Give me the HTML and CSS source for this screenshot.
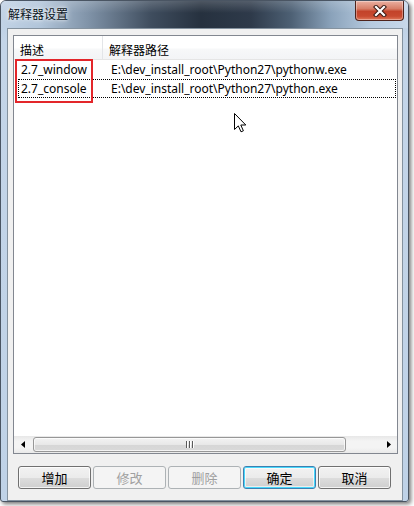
FILE: index.html
```html
<!DOCTYPE html>
<html lang="zh">
<head>
<meta charset="utf-8">
<title>解释器设置</title>
<link rel="stylesheet" href="styles.css">
</head>
<body>
<div class="window">
  <div class="titlebar">
    <span class="title">解释器设置</span>
    <div class="close">
      <svg width="14" height="12" viewBox="0 0 14 12">
        <path d="M3 2 L11 10 M11 2 L3 10" stroke="#3a1a14" stroke-width="4.2" stroke-linecap="square"/>
        <path d="M3 2 L11 10 M11 2 L3 10" stroke="#ffffff" stroke-width="2.2" stroke-linecap="square"/>
      </svg>
    </div>
  </div>
  <div class="client">
    <div class="list">
      <div class="header">
        <div class="hcell c1">描述</div>
        <div class="hcell c2">解释器路径</div>
      </div>
      <div class="row">
        <div class="cell c1">2.7_window</div>
        <div class="cell c2">E:\dev_install_root\Python27\pythonw.exe</div>
      </div>
      <div class="row focus">
        <div class="cell c1">2.7_console</div>
        <div class="cell c2">E:\dev_install_root\Python27\python.exe</div>
      </div>
      <div class="spacer"></div>
      <div class="hscroll">
        <div class="arrow">
          <svg width="4" height="7" viewBox="0 0 4 7"><path d="M4 0 L0 3.5 L4 7 Z" fill="#000"/></svg>
        </div>
        <div class="track">
          <div class="thumb"><span class="grip"></span><span class="grip"></span><span class="grip"></span></div>
        </div>
        <div class="arrow">
          <svg width="4" height="7" viewBox="0 0 4 7"><path d="M0 0 L4 3.5 L0 7 Z" fill="#000"/></svg>
        </div>
      </div>
      <div class="mark"></div>
    </div>
    <div class="buttons">
      <button class="btn">增加</button>
      <button class="btn" disabled>修改</button>
      <button class="btn" disabled>删除</button>
      <button class="btn default">确定</button>
      <button class="btn">取消</button>
    </div>
  </div>
</div>
<svg class="cursor" width="13" height="20" viewBox="0 0 13 20">
  <path d="M0.5 0.5 L0.5 16.5 L4.3 12.9 L7 18.8 L9.4 17.8 L6.8 12 L11.8 12 Z" fill="#fff" stroke="#000" stroke-width="1" stroke-linejoin="miter"/>
</svg>
</body>
</html>
```
FILE: styles.css
```css
html, body {
  margin: 0;
  padding: 0;
  background: #ffffff;
}
body {
  width: 414px;
  height: 506px;
  position: relative;
  overflow: hidden;
  font-family: "Noto Sans", "Noto Sans CJK SC", sans-serif;
  font-size: 12px;
  color: #000;
}
.window {
  width: 407px;
  height: 500px;
  border: 1px solid #4a5563;
  border-radius: 6px 6px 3px 3px;
  box-shadow: 2px 2px 4px rgba(0,0,0,0.55);
  background:
    linear-gradient(to bottom, rgba(255,255,255,0.25), rgba(255,255,255,0) 30px),
    linear-gradient(to bottom, #b7cbe0 0px, #c4d5e8 40px, #bfd2e7 100%);
  display: flex;
  flex-direction: column;
  overflow: hidden;
}
.titlebar {
  height: 27px;
  flex: none;
  display: flex;
  justify-content: space-between;
  align-items: flex-start;
  background:
    linear-gradient(to bottom, rgba(255,255,255,0.18) 0px, rgba(255,255,255,0) 12px),
    linear-gradient(to right, #c2d3e6 0px, #b0c4d9 40px, #7d90a5 90px, #3f4d5e 150px, #26313f 200px, #2e3a4a 250px, #4d6074 290px, #8aa2ba 330px, #b7cbe0 370px, #c8d8ea 407px);
}
.title {
  font-family: "Noto Sans CJK SC", sans-serif;
  font-size: 12px;
  line-height: 14px;
  color: #0b1421;
  margin: 6px 0 0 7px;
  text-shadow: 0 0 6px rgba(255,255,255,0.9), 0 0 3px rgba(255,255,255,0.8);
}
.close {
  width: 47px;
  height: 19px;
  margin-right: 4px;
  border: 1px solid #4e231b;
  border-top: none;
  border-radius: 0 0 4px 4px;
  background: linear-gradient(to bottom, #eab0a2 0%, #d77f69 40%, #c3432a 55%, #c84a30 80%, #e07a5c 100%);
  box-shadow: inset 0 0 0 1px rgba(255,255,255,0.35);
  display: flex;
  align-items: center;
  justify-content: center;
}
.client {
  margin: 0 5px 0 6px;
  height: 466px;
  border: 1px solid #84929f;
  background: #f0f0f0;
  padding: 6px 10px 0 5px;
  display: flex;
  flex-direction: column;
  box-sizing: content-box;
}
.list {
  position: relative;
  width: 383px;
  height: 417px;
  border: 1px solid #828790;
  background: #fff;
  display: flex;
  flex-direction: column;
}
.header {
  height: 23px;
  flex: none;
  display: flex;
  border-bottom: 1px solid #e5e5e5;
  background: linear-gradient(to bottom, #ffffff 0px, #ffffff 12px, #f7f8f9 13px, #f3f4f6 23px);
}
.hcell {
  font-family: "Noto Sans CJK SC", sans-serif;
  line-height: 23px;
  padding: 2px 0 0 6px;
  box-sizing: border-box;
  color: #000;
}
.hcell.c1 {
  width: 89px;
  border-right: 1px solid #e3e5e8;
}
.row {
  display: flex;
  height: 19px;
  flex: none;
}
.row.focus {
  outline: 1px dotted #000;
  outline-offset: -1px;
  margin: 0 1px 0 4px;
}
.cell {
  line-height: 19px;
  padding-left: 7px;
  white-space: nowrap;
}
.cell.c1 {
  width: 83px;
}
.row.focus .cell.c1 {
  width: 83px;
  padding-left: 3px;
}
.spacer {
  flex: 1;
}
.hscroll {
  height: 17px;
  flex: none;
  display: flex;
  background: linear-gradient(to bottom, #e7e7e7, #f4f4f4 30%, #f4f4f4 70%, #e9e9e9);
}
.arrow {
  width: 17px;
  display: flex;
  align-items: center;
  justify-content: center;
}
.track {
  flex: 1;
  padding: 1px 34px 1px 2px;
  display: flex;
}
.thumb {
  flex: 1;
  border: 1px solid #979797;
  border-radius: 3px;
  background: linear-gradient(to bottom, #f3f3f3 0%, #e8e8e8 50%, #d6d6d6 51%, #d9d9d9 100%);
  box-shadow: inset 0 0 0 1px rgba(255,255,255,0.7);
  display: flex;
  align-items: center;
  justify-content: center;
  gap: 1px;
}
.grip {
  width: 1px;
  height: 7px;
  background: #5a5a5a;
  border-right: 1px solid #fff;
}
.mark {
  position: absolute;
  left: 1px;
  top: 23px;
  width: 74px;
  height: 40px;
  border: 2px solid #e3262a;
}
.buttons {
  display: flex;
  gap: 2px;
  margin-top: 12px;
  padding-left: 5px;
}
.btn {
  width: 73px;
  height: 23px;
  padding: 0;
  border: 1px solid #707070;
  border-radius: 3px;
  background: linear-gradient(to bottom, #f2f2f2 0%, #ebebeb 50%, #dddddd 51%, #cfcfcf 100%);
  box-shadow: inset 0 0 0 1px rgba(255,255,255,0.75);
  font-family: "Noto Sans CJK SC", sans-serif;
  font-size: 13px;
  color: #000;
  line-height: 21px;
}
.btn:disabled {
  border-color: #adb2b5;
  background: #f4f4f4;
  box-shadow: none;
  color: #a0a0a0;
}
.btn.default {
  border-color: #3c7fb1;
  box-shadow: inset 0 0 0 1px #48d8fb, inset 0 0 0 2px rgba(255,255,255,0.6);
}
.cursor {
  position: absolute;
  left: 234px;
  top: 113px;
}
```
